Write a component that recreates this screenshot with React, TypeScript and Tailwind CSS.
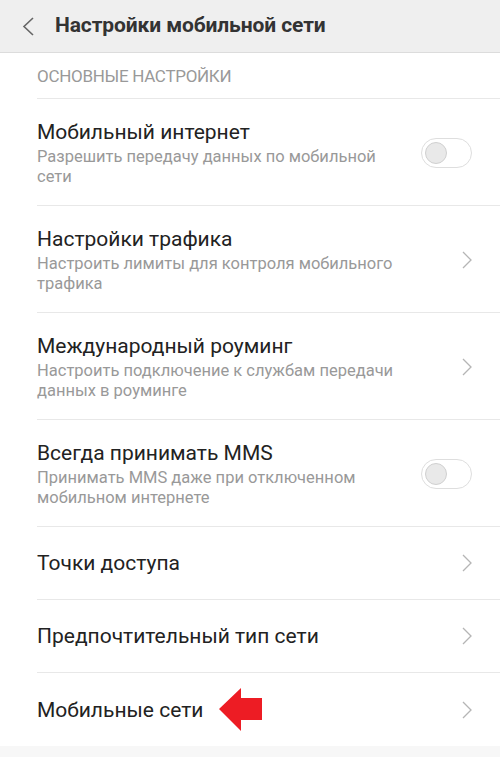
const Toggle = () => (
  <div className="w-[51px] h-[30px] rounded-full border border-[#dedede] bg-white flex items-center px-[3px] shrink-0">
    <div className="w-[22px] h-[22px] rounded-full bg-[#e9e9e9] border border-[#d0d0d0]" />
  </div>
);

const Chevron = () => (
  <svg width="10" height="18" viewBox="0 0 10 18" className="shrink-0 mr-[28px]">
    <path d="M1 1 L9 9 L1 17" fill="none" stroke="#b5b5b5" strokeWidth="1.3" />
  </svg>
);

const Arrow = () => (
  <svg width="44" height="44" viewBox="0 0 44 44" className="ml-[16px] shrink-0">
    <polygon points="0,21 22,0 22,10 43,10 43,32 22,32 22,43" fill="#ed1c24" />
  </svg>
);

type Item = {
  title: string;
  sub?: string[];
  control: "toggle" | "chevron";
  arrow?: boolean;
};

const items: Item[] = [
  {
    title: "Мобильный интернет",
    sub: ["Разрешить передачу данных по мобильной", "сети"],
    control: "toggle",
  },
  {
    title: "Настройки трафика",
    sub: ["Настроить лимиты для контроля мобильного", "трафика"],
    control: "chevron",
  },
  {
    title: "Международный роуминг",
    sub: ["Настроить подключение к службам передачи", "данных в роуминге"],
    control: "chevron",
  },
  {
    title: "Всегда принимать MMS",
    sub: ["Принимать MMS даже при отключенном", "мобильном интернете"],
    control: "toggle",
  },
  { title: "Точки доступа", control: "chevron" },
  { title: "Предпочтительный тип сети", control: "chevron" },
  { title: "Мобильные сети", control: "chevron", arrow: true },
];

export default function App() {
  return (
    <div
      className="w-[500px] h-[757px] bg-[#f7f7f7] overflow-hidden"
      style={{ fontFamily: "Roboto, 'Noto Sans', sans-serif" }}
    >
      {/* Header */}
      <div className="h-[53px] bg-[#efefef] border-b border-[#dcdcdc] flex items-center">
        <svg width="12" height="19" viewBox="0 0 12 19" className="ml-[22px]">
          <path d="M11 1 L2 9.5 L11 18" fill="none" stroke="#666" strokeWidth="1.6" />
        </svg>
        <h1 className="ml-[21px] text-[21px] font-bold text-[#333] tracking-[-0.1px]">
          Настройки мобильной сети
        </h1>
      </div>

      <div className="bg-white">
        {/* Section header */}
        <div className="h-[46px] ml-[37px] border-b border-[#e8e8e8] flex items-center pt-[3px]">
          <span className="text-[17px] text-[#999] tracking-[-0.3px]">ОСНОВНЫЕ НАСТРОЙКИ</span>
        </div>

        {items.map((item, i) => (
          <div
            key={item.title}
            className={`ml-[37px] flex items-center ${
              i < items.length - 1 ? "border-b border-[#e8e8e8]" : ""
            } ${item.sub ? "h-[107px] pt-[2px]" : "h-[73px]"}`}
          >
            <div className="flex-1 flex items-center">
              <div>
                <div className="text-[21px] leading-[26px] text-[#222]">{item.title}</div>
                {item.sub && (
                  <div className="text-[16.5px] leading-[20px] text-[#999] mt-[2px]">
                    {item.sub.map((s) => (
                      <div key={s}>{s}</div>
                    ))}
                  </div>
                )}
              </div>
              {item.arrow && <Arrow />}
            </div>
            {item.control === "toggle" ? (
              <div className="mr-[28px]">
                <Toggle />
              </div>
            ) : (
              <Chevron />
            )}
          </div>
        ))}
      </div>
    </div>
  );
}
